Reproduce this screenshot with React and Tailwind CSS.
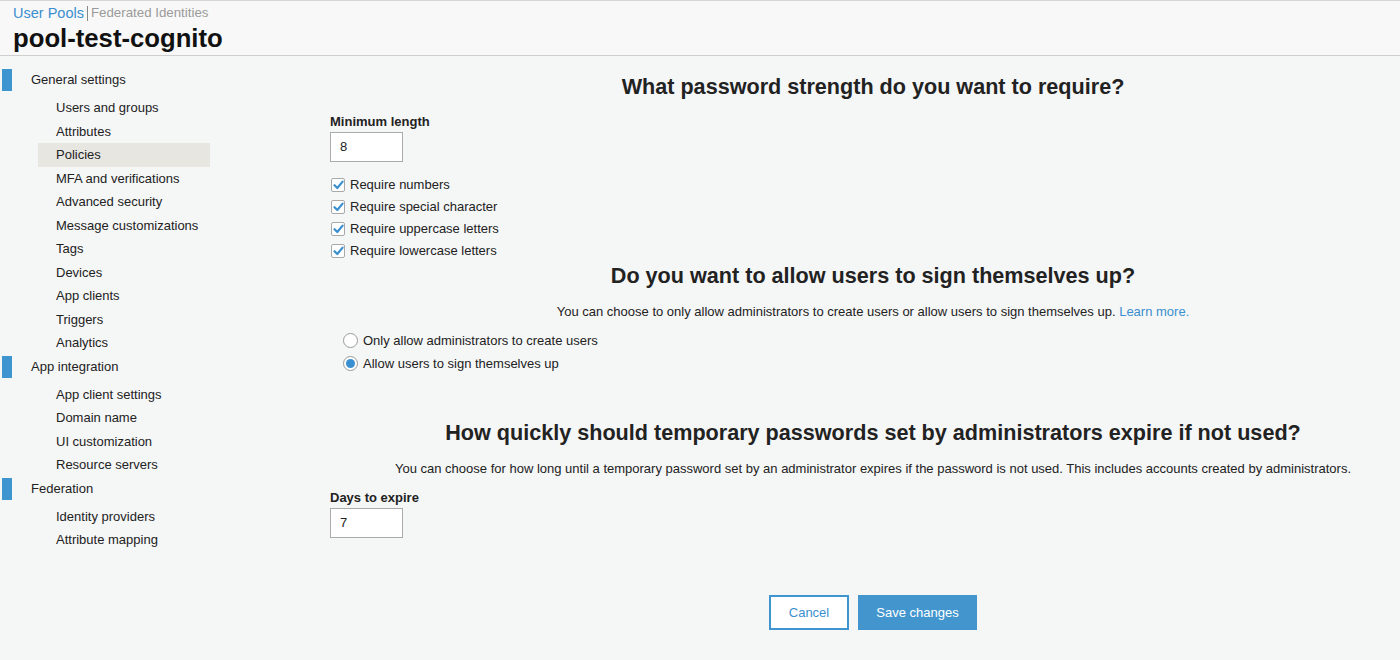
import React from "react";

const font = { fontFamily: '"Liberation Sans", Arial, sans-serif' };

function Check() {
  return (
    <span className="w-[14px] h-[14px] border border-[#a9a9a9] bg-white rounded-[2px] flex items-center justify-center">
      <svg width="11" height="10" viewBox="0 0 11 10">
        <path d="M1.5 5.2 L4.3 8 L9.6 1.6" fill="none" stroke="#3a8fd0" strokeWidth="2.2" strokeLinecap="round" strokeLinejoin="round" />
      </svg>
    </span>
  );
}

function Radio({ on }) {
  return (
    <span className="w-[15px] h-[15px] rounded-full border border-[#9a9a9a] bg-white flex items-center justify-center">
      {on && <span className="w-[9px] h-[9px] rounded-full bg-[#3a8fd0]" />}
    </span>
  );
}

const groups = [
  { title: "General settings", items: ["Users and groups", "Attributes", "Policies", "MFA and verifications", "Advanced security", "Message customizations", "Tags", "Devices", "App clients", "Triggers", "Analytics"] },
  { title: "App integration", items: ["App client settings", "Domain name", "UI customization", "Resource servers"] },
  { title: "Federation", items: ["Identity providers", "Attribute mapping"] },
];

export default function App() {
  return (
    <div className="w-[1400px] h-[660px] overflow-hidden bg-[#f5f6f6] text-[#222]" style={font}>
      <div className="border-t border-[#d6d6d6] border-b border-b-[#cfcfcf] bg-[#f8f8f8] h-[56px] pl-[13px] pt-[3px]">
        <div className="text-[14.5px] leading-[18px] flex items-center">
          <span className="text-[#3b8fcf]">User Pools</span>
          <span className="w-px h-[15px] bg-[#888] mx-[3px]" />
          <span className="text-[#9a9a9a] text-[13.3px]">Federated Identities</span>
        </div>
        <div className="text-[25.7px] leading-[30px] font-bold text-[#111] mt-[1px]">pool-test-cognito</div>
      </div>
      <div className="flex">
        <div className="w-[330px] shrink-0 pt-[12px]">
          {groups.map((g) => (
            <div key={g.title}>
              <div className="flex items-center h-[24px] text-[13px]">
                <span className="w-[10px] h-[22px] bg-[#3f95d0] ml-[2px]" />
                <span className="ml-[19px] text-[#222]">{g.title}</span>
              </div>
              <div className="pt-[4px]">
                {g.items.map((it) => (
                  <div
                    key={it}
                    className={`h-[23.5px] flex items-center text-[13px] ml-[38px] w-[172px] pl-[18px] ${it === "Policies" ? "bg-[#e8e6e1]" : ""}`}
                  >
                    {it}
                  </div>
                ))}
              </div>
            </div>
          ))}
        </div>
        <div className="flex-1 pt-[18px]">
          <h2 className="pl-[16px] text-center text-[21.6px] leading-[26px] font-bold text-[#222]">What password strength do you want to require?</h2>
          <div className="mt-[14px] text-[13px] font-bold leading-[16px]">Minimum length</div>
          <div className="mt-[2px] w-[73px] h-[30px] border border-[#aaa] bg-white flex items-center pl-[9px] text-[13px]">8</div>
          <div className="mt-[12px] flex flex-col">
            {["Require numbers", "Require special character", "Require uppercase letters", "Require lowercase letters"].map((t) => (
              <div key={t} className="flex items-center h-[22px] text-[13px] pl-[1px]">
                <Check />
                <span className="ml-[5px]">{t}</span>
              </div>
            ))}
          </div>
          <h2 className="mt-[1px] pl-[16px] text-center text-[21.6px] leading-[26px] font-bold text-[#222]">Do you want to allow users to sign themselves up?</h2>
          <p className="mt-[15px] pl-[16px] text-center text-[13px] leading-[16px]">
            You can choose to only allow administrators to create users or allow users to sign themselves up. <span className="text-[#3b8fcf]">Learn more.</span>
          </p>
          <div className="mt-[9px] pl-[13px] flex flex-col">
            <div className="flex items-center h-[23px] text-[13px]">
              <Radio />
              <span className="ml-[5px]">Only allow administrators to create users</span>
            </div>
            <div className="flex items-center h-[23px] text-[13px]">
              <Radio on />
              <span className="ml-[5px]">Allow users to sign themselves up</span>
            </div>
          </div>
          <h2 className="mt-[45px] pl-[16px] text-center text-[21.6px] leading-[26px] font-bold text-[#222]">How quickly should temporary passwords set by administrators expire if not used?</h2>
          <p className="mt-[15px] pl-[16px] text-center text-[13px] leading-[16px]">
            You can choose for how long until a temporary password set by an administrator expires if the password is not used. This includes accounts created by administrators.
          </p>
          <div className="mt-[13px] text-[13px] font-bold leading-[16px]">Days to expire</div>
          <div className="mt-[2px] w-[73px] h-[30px] border border-[#aaa] bg-white flex items-center pl-[9px] text-[13px]">7</div>
          <div className="mt-[57px] pl-[16px] flex justify-center gap-[9px]">
            <button className="w-[80px] h-[35px] border-2 border-[#3f95d0] bg-white text-[#3b8fcf] text-[13px]">Cancel</button>
            <button className="w-[119px] h-[35px] bg-[#4396cd] text-white text-[13px]">Save changes</button>
          </div>
        </div>
      </div>
    </div>
  );
}
